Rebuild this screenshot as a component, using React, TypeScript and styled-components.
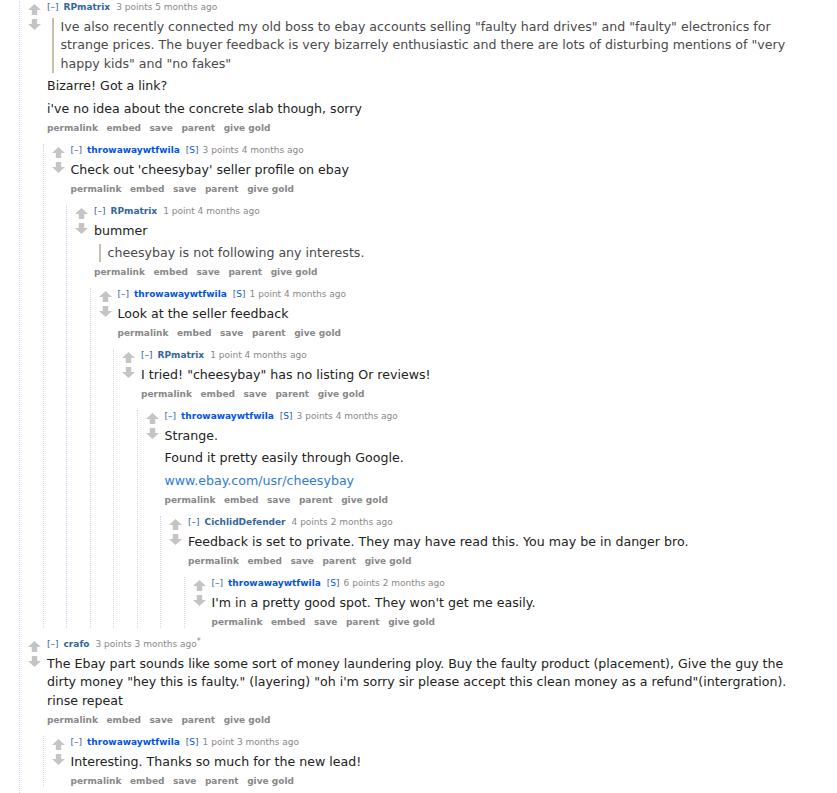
import { Fragment, type FC } from 'react'
import styled, { createGlobalStyle } from 'styled-components'

type Block =
  | { kind: 'p'; text: string }
  | { kind: 'quote'; text: string }
  | { kind: 'link'; text: string }

type CommentData = {
  id: string
  author: string
  submitter?: boolean
  score: string
  time: string
  edited?: boolean
  body: Block[]
  children?: CommentData[]
}

const p = (text: string): Block => ({ kind: 'p', text })
const quote = (text: string): Block => ({ kind: 'quote', text })
const link = (text: string): Block => ({ kind: 'link', text })

const OP = 'throwawaywtfwila'

const thread: CommentData[] = [
  {
    id: 'c1',
    author: 'RPmatrix',
    score: '3 points',
    time: '5 months ago',
    body: [
      quote(
        'Ive also recently connected my old boss to ebay accounts selling "faulty hard drives" and "faulty" electronics for strange prices. The buyer feedback is very bizarrely enthusiastic and there are lots of disturbing mentions of "very happy kids" and "no fakes"',
      ),
      p('Bizarre! Got a link?'),
      p("i've no idea about the concrete slab though, sorry"),
    ],
    children: [
      {
        id: 'c2',
        author: OP,
        submitter: true,
        score: '3 points',
        time: '4 months ago',
        body: [p("Check out 'cheesybay' seller profile on ebay")],
        children: [
          {
            id: 'c3',
            author: 'RPmatrix',
            score: '1 point',
            time: '4 months ago',
            body: [p('bummer'), quote('cheesybay is not following any interests.')],
            children: [
              {
                id: 'c4',
                author: OP,
                submitter: true,
                score: '1 point',
                time: '4 months ago',
                body: [p('Look at the seller feedback')],
                children: [
                  {
                    id: 'c5',
                    author: 'RPmatrix',
                    score: '1 point',
                    time: '4 months ago',
                    body: [p('I tried! "cheesybay" has no listing Or reviews!')],
                    children: [
                      {
                        id: 'c6',
                        author: OP,
                        submitter: true,
                        score: '3 points',
                        time: '4 months ago',
                        body: [
                          p('Strange.'),
                          p('Found it pretty easily through Google.'),
                          link('www.ebay.com/usr/cheesybay'),
                        ],
                        children: [
                          {
                            id: 'c7',
                            author: 'CichlidDefender',
                            score: '4 points',
                            time: '2 months ago',
                            body: [
                              p(
                                'Feedback is set to private. They may have read this. You may be in danger bro.',
                              ),
                            ],
                            children: [
                              {
                                id: 'c8',
                                author: OP,
                                submitter: true,
                                score: '6 points',
                                time: '2 months ago',
                                body: [
                                  p("I'm in a pretty good spot. They won't get me easily."),
                                ],
                              },
                            ],
                          },
                        ],
                      },
                    ],
                  },
                ],
              },
            ],
          },
        ],
      },
    ],
  },
  {
    id: 'c9',
    author: 'crafo',
    score: '3 points',
    time: '3 months ago',
    edited: true,
    body: [
      p(
        'The Ebay part sounds like some sort of money laundering ploy. Buy the faulty product (placement), Give the guy the dirty money "hey this is faulty." (layering) "oh i\'m sorry sir please accept this clean money as a refund"(intergration). rinse repeat',
      ),
    ],
    children: [
      {
        id: 'c10',
        author: OP,
        submitter: true,
        score: '1 point',
        time: '3 months ago',
        body: [p('Interesting. Thanks so much for the new lead!')],
      },
    ],
  },
]

const buttons = ['permalink', 'embed', 'save', 'parent', 'give gold']

const GlobalStyle = createGlobalStyle`
  html, body {
    margin: 0;
    padding: 0;
    background: #ffffff;
  }
  body {
    font-family: "DejaVu Sans", Verdana, Arial, sans-serif;
    color: #222222;
  }
`

const Page = styled.div`
  padding: 1px 0 0 19px;
  min-height: 793px;
  box-sizing: border-box;
  display: flex;
`

const Child = styled.div<{ $top?: boolean }>`
  border-left: 1px dotted #d2d2f4;
  margin-left: ${(p) => (p.$top ? '0' : '14.5px')};
  margin-top: ${(p) => (p.$top ? '0' : '9.6px')};
  padding-bottom: ${(p) => (p.$top ? '20px' : '0')};
  flex: ${(p) => (p.$top ? '1' : 'initial')};
`

const CommentBox = styled.div`
  margin-left: 8px;
  & + & {
    margin-top: 9.6px;
  }
`

const Row = styled.div`
  display: flex;
  align-items: flex-start;
`

const Midcol = styled.div`
  width: 13px;
  margin-right: 6px;
  padding-top: 3px;
  display: flex;
  flex-direction: column;
  gap: 4px;
  flex-shrink: 0;
`

const Entry = styled.div`
  flex: 1;
  min-width: 0;
`

const Tagline = styled.p`
  margin: 0;
  font-size: 9px;
  line-height: 13px;
  color: #888888;
  white-space: nowrap;
`

const Expand = styled.span`
  color: #336699;
  margin-right: 5px;
`

const Author = styled.span<{ $op?: boolean }>`
  color: ${(p) => (p.$op ? '#0055df' : '#336699')};
  font-weight: bold;
  margin-right: 6px;
`

const SubmitterTag = styled.span`
  color: #336699;
  margin-right: 4px;

  b {
    font-weight: normal;
    color: #0055df;
  }
`

const Edited = styled.span`
  font-size: 8px;
  line-height: 8px;
  vertical-align: top;
`

const UserText = styled.div`
  margin-top: 4px;
  max-width: 756px;
  font-size: 12.6px;
  line-height: 18.4px;
  color: #222222;
`

const Para = styled.p`
  margin: 0 0 4px;
`

const Quote = styled.blockquote`
  margin: 0 0 4px 4.5px;
  padding: 0 7px;
  border-left: 2px solid #c5c1ad;
  color: #4a4a4a;

  p {
    margin: 0;
  }
`

const BodyLink = styled.a`
  color: #2f7bd0;
  text-decoration: none;
`

const Buttons = styled.ul`
  list-style: none;
  margin: 0;
  padding: 0;
  display: flex;
  gap: 8.5px;
  font-size: 9px;
  line-height: 12px;
  font-weight: bold;
`

const ButtonLink = styled.li`
  color: #888888;
  white-space: nowrap;
`

const Arrow: FC<{ down?: boolean }> = ({ down }) => (
  <svg
    width="13"
    height="11"
    viewBox="0 0 13 11"
    style={{ display: 'block', transform: down ? 'rotate(180deg)' : undefined }}
  >
    <path d="M6.5 0 L13 6 L9.2 6 L9.2 11 L3.8 11 L3.8 6 L0 6 Z" fill="#c4c4c4" />
  </svg>
)

const Body: FC<{ blocks: Block[] }> = ({ blocks }) => (
  <UserText>
    {blocks.map((b, i) => {
      if (b.kind === 'quote') {
        return (
          <Quote key={i}>
            <p>{b.text}</p>
          </Quote>
        )
      }
      if (b.kind === 'link') {
        return (
          <Para key={i}>
            <BodyLink href="#">{b.text}</BodyLink>
          </Para>
        )
      }
      return <Para key={i}>{b.text}</Para>
    })}
  </UserText>
)

const Comment: FC<{ data: CommentData }> = ({ data }) => (
  <CommentBox>
    <Row>
      <Midcol>
        <Arrow />
        <Arrow down />
      </Midcol>
      <Entry>
        <Tagline>
          <Expand>[–]</Expand>
          <Author $op={data.submitter}>{data.author}</Author>
          {data.submitter && (
            <SubmitterTag>
              [<b>S</b>]
            </SubmitterTag>
          )}
          {data.score} {data.time}
          {data.edited && <Edited>*</Edited>}
        </Tagline>
        <Body blocks={data.body} />
        <Buttons>
          {buttons.map((b) => (
            <ButtonLink key={b}>{b}</ButtonLink>
          ))}
        </Buttons>
      </Entry>
    </Row>
    {data.children && data.children.length > 0 && (
      <Child>
        {data.children.map((c) => (
          <Comment key={c.id} data={c} />
        ))}
      </Child>
    )}
  </CommentBox>
)

export default function App() {
  return (
    <Fragment>
      <GlobalStyle />
      <Page>
        <Child $top>
          {thread.map((c) => (
            <Comment key={c.id} data={c} />
          ))}
        </Child>
      </Page>
    </Fragment>
  )
}
